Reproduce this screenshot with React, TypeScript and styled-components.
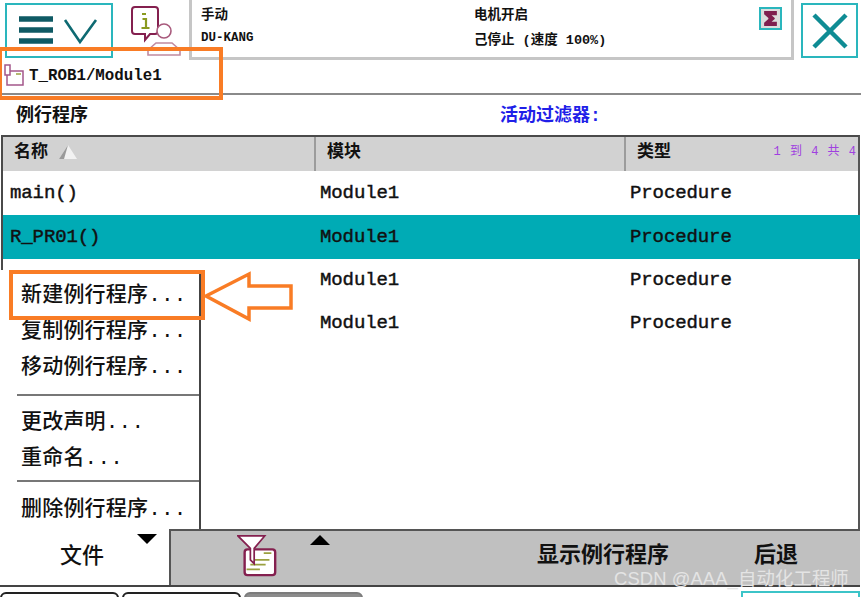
import React from "react";
import styled, { createGlobalStyle } from "styled-components";

const Global = createGlobalStyle`
  html, body { margin: 0; padding: 0; background: #fff; }
  #root { width: 865px; height: 597px; }
  * { box-sizing: border-box; }
`;
const FONT = `"Liberation Mono", "Noto Sans CJK SC", monospace`;

const Page = styled.div`
  position: relative; width: 865px; height: 597px; overflow: hidden;
  background: #fff; color: #111; font-family: ${FONT};
  display: flex; flex-direction: column;
`;
const TopBar = styled.div`
  height: 62px; display: flex; align-items: flex-start; padding-left: 5px;
`;
const TealButton = styled.div<{ $w: number }>`
  width: ${p => p.$w}px; height: 55px; margin-top: 3px; border: 2px solid #2ab6bd;
  background: #fff; display: flex; align-items: center; justify-content: center; flex: none;
`;
const InfoSlot = styled.div`
  width: 76px; height: 58px; display: flex; justify-content: flex-end; padding-right: 8px; padding-top: 5px; flex: none;
`;
const Status = styled.div`
  width: 605px; height: 61px; margin-top: -1px; border: 3px solid #c6c6c6; border-top: none;
  display: grid; grid-template-columns: 273px 1fr; grid-template-rows: 27px 24px; padding: 0 0 0 9px;
  position: relative; font-size: 13.5px; font-weight: 700; margin-right: 7px; flex: none;
  align-items: center;
`;
const UserName = styled.span` font-size: 12.5px; `;
const Mode = styled.div`
  position: absolute; right: 9px; top: 8px; width: 23px; height: 23px; border: 2px solid #2ab6bd;
  background: #ddd; display: flex; align-items: center; justify-content: center;
`;
const PathRow = styled.div`
  height: 33px; width: 861px; border-bottom: 2px solid #8a8a8a; display: flex; align-items: center;
  gap: 5px; padding: 0 0 4px 4px; font-size: 15.8px; font-weight: 700;
`;
const SubHeader = styled.div`
  height: 40px; display: flex; align-items: center; padding: 0 0 4px 16px; font-size: 18px; font-weight: 700;
`;
const SubTitle = styled.span` width: 484px; `;
const Filter = styled.span` color: #1f1fe8; `;
const Table = styled.div`
  margin-left: 1px; width: 859px; height: 395px; border: 2px solid #4a4a4a; border-bottom: none; border-right-color: #555;
  display: flex; flex-direction: column;
`;
const HeadRow = styled.div`
  height: 34px; display: grid; grid-template-columns: 313px 310px 1fr; background: #d2d2d2; flex: none;
`;
const HeadCell = styled.div`
  border-right: 2px solid #9c9c9c; padding: 0 0 0 11px; font-size: 17px; font-weight: 700;
  display: flex; align-items: flex-start; gap: 10px; position: relative;
  &:last-child { border-right: none; }
`;
const Count = styled.span`
  position: absolute; right: 2px; top: 4px; color: #a040e0; font-size: 12px; font-weight: 400; word-spacing: 2px;
`;
const Row = styled.div<{ $selected?: boolean; $h: number }>`
  height: ${p => p.$h}px; display: grid; grid-template-columns: 313px 310px 1fr; align-items: center;
  background: ${p => (p.$selected ? "#00abb5" : "transparent")};
  font-size: 19px; flex: none; margin-right: ${p => (p.$selected ? "-2px" : "0")};
`;
const Cell = styled.div`
  padding-left: 4px; white-space: nowrap; -webkit-text-stroke: 0.45px #111; letter-spacing: -0.1px;
  &:first-child { padding-left: 7px; }
`;
const Menu = styled.div`
  position: absolute; left: 0; top: 270px; width: 201px; height: 260px; background: #fff;
  border-right: 2px solid #444; padding: 4px 0 0 21px; font-size: 21px; font-weight: 500;
  display: flex; flex-direction: column;
`;
const MenuItem = styled.div<{ $h: number }>`
  height: ${p => p.$h}px; display: flex; align-items: center; white-space: nowrap; letter-spacing: 0.2px;
`;
const MenuRule = styled.div` height: 2px; background: #777; margin: 0 0 0 -4px; flex: none; `;
const BottomBar = styled.div`
  position: absolute; left: 0; top: 529px; width: 860px; height: 58px; display: flex;
  border-bottom: 2px solid #444;
`;
const FileTab = styled.div`
  width: 169px; background: #fff; position: relative; display: flex; align-items: center; justify-content: center;
  font-size: 22px; font-weight: 500; padding: 0 5px 7px 0;
`;
const Tools = styled.div`
  flex: 1; background: #c0c0c0; border-left: 2px solid #555; border-top: 2px solid #555; position: relative;
  display: flex; align-items: center; font-size: 22px; line-height: 22px; font-weight: 700; padding: 0 0 0 66px;
`;
const Caret = styled.div<{ $up?: boolean; $x: number; $y: number }>`
  position: absolute; left: ${p => p.$x}px; top: ${p => p.$y}px; width: 0; height: 0;
  border-left: 10px solid transparent; border-right: 10px solid transparent;
  ${p => (p.$up ? "border-bottom: 10px solid #000;" : "border-top: 10px solid #000;")}
`;
const ToolLabel = styled.span<{ $w: number }>`
  width: ${p => p.$w}px; flex: none; margin-bottom: 3px;
`;
const Tabs = styled.div`
  position: absolute; left: 0; top: 592px; width: 865px; display: flex; gap: 3px; height: 5px;
`;
const Tab = styled.div<{ $grey?: boolean; $w: number }>`
  width: ${p => p.$w}px; height: 12px; border-radius: 6px 6px 0 0; flex: none;
  border: 2px solid ${p => (p.$grey ? "#7c7c7c" : "#222")}; background: ${p => (p.$grey ? "#8c8c8c" : "#fff")};
`;
const TealTab = styled.div`
  position: absolute; left: 741px; top: 591px; width: 119px; height: 12px; border: 2px solid #3cc4c8;
`;
const OrangeBox = styled.div<{ $x: number; $y: number; $w: number; $h: number }>`
  position: absolute; left: ${p => p.$x}px; top: ${p => p.$y}px; width: ${p => p.$w}px; height: ${p => p.$h}px;
  border: 4px solid #f97c25; pointer-events: none;
`;
const Overlay = styled.svg`
  position: absolute; overflow: visible; left: 203px; top: 271px;
`;
const Watermark = styled.div`
  position: absolute; left: 614px; top: 569px; color: #e4e4e4; font-family: "Liberation Sans", "Noto Sans CJK SC", sans-serif;
  font-size: 18.4px; line-height: 20px; white-space: nowrap; letter-spacing: 0.1px;
`;

const rows = [
  { n: "main()", h: 44, p: "Procedure" },
  { n: "R_PR01()", h: 44, p: "Procedure", sel: true },
  { n: "", h: 42, p: "Procedure" },
  { n: "", h: 44, p: "Procedure" },
];

export default function App() {
  return (
    <Page>
      <Global />
      <TopBar>
        <TealButton $w={108}>
          <svg width="80" height="30" viewBox="0 0 80 30">
            <path d="M0 3h34M0 14h34M0 25h34" stroke="#0e5a64" strokeWidth="5.5" />
            <path d="M46 4l15 22 16-22" stroke="#0e6a72" strokeWidth="2.6" fill="none" />
          </svg>
        </TealButton>
        <InfoSlot>
          <svg width="50" height="52" viewBox="0 0 50 52">
            <path d="M4 2h20a3 3 0 0 1 3 3v21a3 3 0 0 1-3 3h-5l-5 6v-6H4a3 3 0 0 1-3-3V5a3 3 0 0 1 3-3z" fill="#fff" stroke="#84204f" strokeWidth="2" />
            <path d="M11 9h4M11.500 14h3.500v9M10.500 23h8" stroke="#8a9a20" strokeWidth="2.200" fill="none" />
            <circle cx="33" cy="26" r="7" fill="#fff" stroke="#a85a7c" strokeWidth="1.600" />
            <path d="M17 50v-5l8-7h16l8 7v5z" fill="#fff" stroke="#c08aa0" strokeWidth="1.600" />
          </svg>
        </InfoSlot>
        <Status>
          <span>手动</span>
          <span>电机开启</span>
          <UserName>DU-KANG</UserName>
          <span>己停止 (速度 100%)</span>
          <Mode>
            <svg width="17" height="17" viewBox="0 0 16 16">
              <path d="M2 1h12v4H9l3 2.500v1L9 11h5v4H2v-3l4-3.500v-1L2 4z" fill="#7f1f4f" />
            </svg>
          </Mode>
        </Status>
        <TealButton $w={57}>
          <svg width="40" height="40" viewBox="0 0 40 40">
            <path d="M4 4l32 32M36 4L4 36" stroke="#0f8c94" strokeWidth="4.500" />
          </svg>
        </TealButton>
      </TopBar>
      <PathRow>
        <svg width="20" height="24" viewBox="0 0 20 24">
          <path d="M1 1h5v10H1zM6 7h13v14H3v-10" fill="none" stroke="#a4578a" strokeWidth="1.500" />
          <path d="M12 10h5" stroke="#9aa040" strokeWidth="1.500" />
        </svg>
        <span>T_ROB1/Module1</span>
      </PathRow>
      <SubHeader>
        <SubTitle>例行程序</SubTitle>
        <Filter>活动过滤器:</Filter>
      </SubHeader>
      <Table>
        <HeadRow>
          <HeadCell>
            名称
            <svg width="20" height="18" viewBox="0 0 20 18" style={{ marginTop: 6 }}>
              <path d="M10 2L1 16h18z" fill="#f2f2f2" />
              <path d="M10 2L1 16h5z" fill="#9a9a9a" />
            </svg>
          </HeadCell>
          <HeadCell>模块</HeadCell>
          <HeadCell>
            类型
            <Count>1 到 4 共 4</Count>
          </HeadCell>
        </HeadRow>
        {rows.map((r, i) => (
          <Row key={i} $h={r.h} $selected={r.sel}>
            <Cell>{r.n}</Cell>
            <Cell>Module1</Cell>
            <Cell>{r.p}</Cell>
          </Row>
        ))}
      </Table>
      <Menu>
        <MenuItem $h={38}>新建例行程序...</MenuItem>
        <MenuItem $h={37}>复制例行程序...</MenuItem>
        <MenuItem $h={39}>移动例行程序...</MenuItem>
        <MenuItem $h={12} />
        <MenuRule />
        <MenuItem $h={49}>更改声明...</MenuItem>
        <MenuItem $h={26}>重命名...</MenuItem>
        <MenuItem $h={12} />
        <MenuRule />
        <MenuItem $h={51}>删除例行程序...</MenuItem>
      </Menu>
      <BottomBar>
        <FileTab>
          文件
          <Caret $x={137} $y={5} />
        </FileTab>
        <Tools>
          <Caret $up $x={139} $y={4} />
          <svg width="42" height="42" viewBox="0 0 44 44" style={{ flex: "none", marginBottom: 4 }}>
            <rect x="8" y="15" width="32" height="27" rx="3" fill="#fff" stroke="#84204f" strokeWidth="2.500" />
            <path d="M28 19h8M14 26h20M14 31h16M10 36h14" stroke="#9aa040" strokeWidth="1.800" />
            <path d="M1 1h28L18 14v16l-4-4V14z" fill="#fff" stroke="#84204f" strokeWidth="1.800" />
          </svg>
          <ToolLabel $w={258} />
          <ToolLabel $w={217}>显示例行程序</ToolLabel>
          <ToolLabel $w={60}>后退</ToolLabel>
        </Tools>
      </BottomBar>
      <Tabs>
        <Tab $w={119} />
        <Tab $w={119} />
        <Tab $w={119} $grey />
      </Tabs>
      <TealTab />
      <OrangeBox $x={-2} $y={47} $w={225} $h={53} />
      <OrangeBox $x={9} $y={270} $w={196} $h={50} />
      <Overlay width="92" height="50" viewBox="0 0 92 50">
        <path d="M3 25L46 3v12h42v22H46v11z" fill="#fff" stroke="#f97c25" strokeWidth="3.500" />
      </Overlay>
      <Watermark>CSDN @AAA_自动化工程师</Watermark>
    </Page>
  );
}
